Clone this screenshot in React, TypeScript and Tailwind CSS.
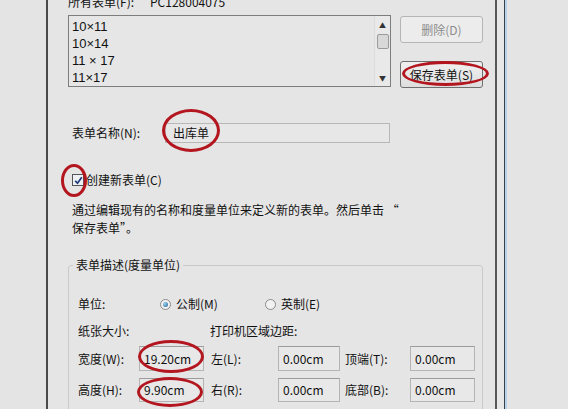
import React from "react";

const font = "font-['Noto_Sans_CJK_SC','Noto_Sans',sans-serif]";

function Field({ value, w }: { value: string; w: string }) {
  return (
    <div
      className={`${w} h-full flex items-center pl-[4px] border border-[#b4b4b4] border-t-[#9c9c9c] bg-[#e8e8e8] text-[12px] text-[#111]`}
    >
      {value}
    </div>
  );
}

function Radio({ checked }: { checked?: boolean }) {
  return (
    <div className="w-[11px] h-[11px] rounded-full border border-[#8a8a8a] bg-[#f2f2f2] flex items-center justify-center shrink-0">
      {checked && (
        <div className="w-[5px] h-[5px] rounded-full bg-[radial-gradient(circle_at_35%_35%,#9fd3f0,#1d5f94)]" />
      )}
    </div>
  );
}

function Ellipse({ cls }: { cls: string }) {
  return (
    <div
      className={`absolute rounded-[50%] border-[3px] border-[#b3161f] pointer-events-none ${cls}`}
    />
  );
}

export default function App() {
  const forms = ["10×11", "10×14", "11 × 17", "11×17"];

  return (
    <div
      className={`relative flex w-[568px] h-[409px] overflow-hidden bg-[#e4e4e4] text-[12px] text-[#111] ${font}`}
    >
      {/* left window edge */}
      <div className="w-[46px] shrink-0" />
      <div className="w-[2px] shrink-0 bg-[#4a4a4a]" />

      {/* dialog content */}
      <div className="w-[447px] shrink-0 flex flex-col pl-[20px] bg-[#e5e5e5]">
        <div className="mt-[-6px] h-[16px] flex items-center leading-[16px]">
          <span className="w-[82px]">所有表单(F):</span>
          <span>PC128004075</span>
        </div>

        {/* list + buttons */}
        <div className="mt-[5px] flex">
          <div className="w-[323px] h-[72px] border border-[#7d7d7d] bg-[#e6e6e6] flex">
            <div className="flex-1 pl-[3px] pt-[2px] text-[13px] font-['Liberation_Sans',sans-serif]">
              {forms.map((f) => (
                <div key={f} className="h-[17px] leading-[17px]">
                  {f}
                </div>
              ))}
            </div>
            <div className="w-[16px] flex flex-col items-center bg-[#e9e9e9] border-l border-[#dcdcdc]">
              <div className="h-[18px] flex items-center justify-center text-[7px] text-[#333]">▲</div>
              <div className="w-[12px] h-[15px] border border-[#9a9a9a] rounded-[2px] bg-[#d8d8d8]" />
              <div className="flex-1" />
              <div className="h-[16px] flex items-center justify-center text-[7px] text-[#333]">▼</div>
            </div>
          </div>
          <div className="ml-[9px] w-[83px] flex flex-col">
            <button className="mt-[1px] h-[27px] border border-[#b5b5b5] rounded-[3px] bg-[#ececec] text-[#8c8c8c] text-[12px]">
              删除(D)
            </button>
            <button className="mt-[18px] h-[27px] border border-[#6e6e6e] rounded-[3px] bg-[linear-gradient(#f0f0f0,#dedede)] text-[12px]">
              保存表单(S)
            </button>
          </div>
        </div>

        {/* form name */}
        <div className="mt-[35px] h-[25px] flex items-center">
          <span className="w-[97px] pl-[4px]">表单名称(N):</span>
          <div className="w-[225px] h-full flex items-center pl-[7px] border border-[#b8b8b8] bg-[#e7e7e7]">
            出库单
          </div>
        </div>

        {/* checkbox */}
        <div className="mt-[31px] h-[12px] flex items-center pl-[4px]">
          <div className="w-[12px] h-[12px] border border-[#555] bg-[#eef1f4] flex items-center justify-center">
            <svg width="9" height="9" viewBox="0 0 9 9">
              <path d="M1.2 4.8 L3.5 7.2 L7.8 1.3" fill="none" stroke="#1f3a7a" strokeWidth="1.7" />
            </svg>
          </div>
          <span className="ml-[2px] leading-[16px]">创建新表单(C)</span>
        </div>

        <p className="mt-[15px] pl-[4px] leading-[18px]">
          通过编辑现有的名称和度量单位来定义新的表单。然后单击 “
          <br />
          保存表单”。
        </p>

        {/* group box */}
        <fieldset className="mt-[20px] w-[415px] border border-[#cacaca] rounded-[3px] pl-[9px] pb-[20px]">
          <legend className="ml-[-5px] px-[3px] leading-[16px]">表单描述(度量单位)</legend>

          <div className="mt-[23px] h-[16px] flex items-center">
            <span className="w-[82px]">单位:</span>
            <Radio checked />
            <span className="ml-[5px] w-[89px]">公制(M)</span>
            <Radio />
            <span className="ml-[5px]">英制(E)</span>
          </div>

          <div className="mt-[11px] h-[16px] flex items-center">
            <span className="w-[132px]">纸张大小:</span>
            <span>打印机区域边距:</span>
          </div>

          <div className="mt-[7px] h-[25px] flex items-center">
            <span className="w-[61px]">宽度(W):</span>
            <Field value="19.20cm" w="w-[65px]" />
            <span className="ml-[7px] w-[67px]">左(L):</span>
            <Field value="0.00cm" w="w-[62px]" />
            <span className="ml-[5px] w-[65px]">顶端(T):</span>
            <Field value="0.00cm" w="w-[65px]" />
          </div>

          <div className="mt-[7px] h-[24px] flex items-center">
            <span className="w-[61px]">高度(H):</span>
            <Field value="9.90cm" w="w-[65px]" />
            <span className="ml-[7px] w-[67px]">右(R):</span>
            <Field value="0.00cm" w="w-[62px]" />
            <span className="ml-[5px] w-[65px]">底部(B):</span>
            <Field value="0.00cm" w="w-[65px]" />
          </div>
        </fieldset>
      </div>

      {/* right window edges */}
      <div className="w-[2px] shrink-0 bg-[#575757]" />
      <div className="w-[7px] shrink-0 bg-[#e8e8e8]" />
      <div className="w-[1px] shrink-0 bg-[#35404c]" />
      <div className="w-[2px] shrink-0 bg-[#b9d1ea]" />
      <div className="flex-1" />

      {/* red annotation circles */}
      <Ellipse cls="left-[402px] top-[61px] w-[87px] h-[25px]" />
      <Ellipse cls="left-[162px] top-[109px] w-[58px] h-[43px]" />
      <Ellipse cls="left-[61px] top-[164px] w-[26px] h-[33px]" />
      <Ellipse cls="left-[138px] top-[340px] w-[66px] h-[33px]" />
      <Ellipse cls="left-[137px] top-[377px] w-[66px] h-[30px]" />
    </div>
  );
}
